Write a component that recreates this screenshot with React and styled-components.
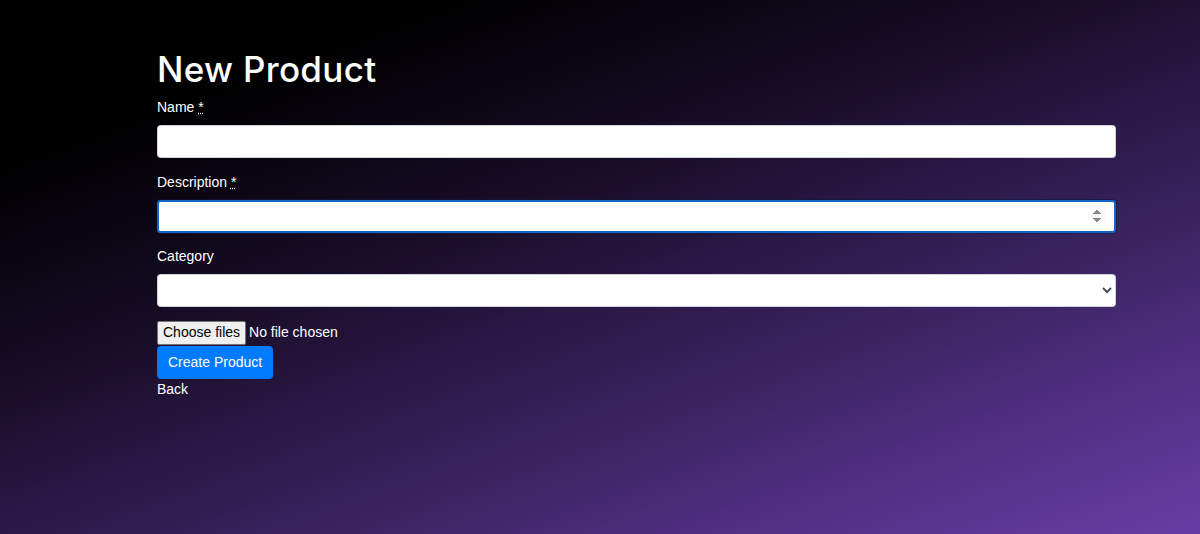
import React from "react";
import styled, { createGlobalStyle } from "styled-components";

const GlobalStyle = createGlobalStyle`
  html { font-size: 14px; height: 100%; }
  body {
    margin: 0;
    min-height: 100%;
    font-family: "Liberation Sans", Arial, sans-serif;
    font-size: 14px;
    line-height: 1.5;
    color: #fff;
    background: linear-gradient(160deg, #000 17%, #180d28 40%, #3c2463 68%, #6a3ca6 100%);
    background-attachment: fixed;
  }
  * { box-sizing: border-box; }
`;

const Page = styled.main`
  min-height: 534px;
  padding: 48px 84px 0 157px;
`;

const Title = styled.h1`
  margin: 0 0 7px;
  font-family: Inter, "Open Sans", sans-serif;
  font-weight: 500;
  font-size: 35px;
  line-height: 42px;
  letter-spacing: 0.3px;
  color: #fff;
`;

const Form = styled.form`
  display: flex;
  flex-direction: column;
`;

const Group = styled.div`
  display: flex;
  flex-direction: column;
  margin-bottom: 13.5px;
`;

const Label = styled.label`
  display: inline-block;
  margin-bottom: 7px;
  line-height: 21px;
`;

const Required = styled.abbr`
  text-decoration: underline dotted;
  cursor: help;
`;

const Field = styled.input`
  display: block;
  width: 100%;
  height: 33px;
  padding: 5px 10px;
  font-family: inherit;
  font-size: 14px;
  color: #495057;
  background: #fff;
  border: 1px solid #ced4da;
  border-radius: 3.5px;
  outline: none;
  ${(p) =>
    p.$focused &&
    `
    border: 2px solid #1765c8;
    box-shadow: 0 0 0 1px rgba(16, 24, 60, 0.6);
    padding: 4px 9px;
  `}
`;

const Select = styled.select`
  display: block;
  width: 100%;
  height: 33px;
  padding: 5px 6px;
  font-family: inherit;
  font-size: 14px;
  color: #495057;
  background: #fff;
  border: 1px solid #ced4da;
  border-radius: 3.5px;
`;

const FilePicker = styled.label`
  display: flex;
  align-items: center;
  gap: 3px;
  height: 24px;
  align-self: flex-start;
  cursor: pointer;
`;

const HiddenFile = styled.input`
  display: none;
`;

const FileButton = styled.span`
  display: inline-flex;
  align-items: center;
  height: 24px;
  padding: 0 5px;
  font-size: 14px;
  color: #000;
  background: #efefef;
  border: 1px solid #767676;
  border-radius: 2px;
`;

const FileStatus = styled.span`
  font-size: 14px;
  color: #fff;
`;

const Button = styled.button`
  align-self: flex-start;
  margin-top: 1px;
  padding: 5px 10px;
  height: 33px;
  font-family: inherit;
  font-size: 14px;
  line-height: 21px;
  color: #fff;
  background: #007bff;
  border: 1px solid #007bff;
  border-radius: 3.5px;
`;

const BackLink = styled.a`
  align-self: flex-start;
  color: #fff;
  text-decoration: none;
  line-height: 21px;
`;

export default function App() {
  return (
    <>
      <GlobalStyle />
      <Page>
        <Title>New Product</Title>
        <Form onSubmit={(e) => e.preventDefault()}>
          <Group>
            <Label htmlFor="name">
              Name <Required title="required">*</Required>
            </Label>
            <Field id="name" type="text" />
          </Group>
          <Group>
            <Label htmlFor="description">
              Description <Required title="required">*</Required>
            </Label>
            <Field id="description" type="number" $focused autoFocus />
          </Group>
          <Group>
            <Label htmlFor="category">Category</Label>
            <Select id="category" defaultValue="">
              <option value=""></option>
            </Select>
          </Group>
          <FilePicker>
            <HiddenFile type="file" multiple />
            <FileButton>Choose files</FileButton>
            <FileStatus>No file chosen</FileStatus>
          </FilePicker>
          <Button type="submit">Create Product</Button>
          <BackLink href="#">Back</BackLink>
        </Form>
      </Page>
    </>
  );
}
